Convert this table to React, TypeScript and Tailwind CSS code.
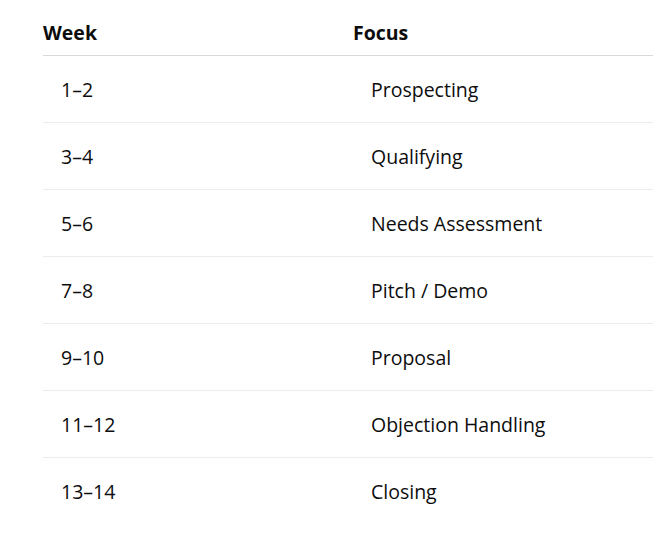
import React from "react";

const rows = [
  { week: "1–2", focus: "Prospecting" },
  { week: "3–4", focus: "Qualifying" },
  { week: "5–6", focus: "Needs Assessment" },
  { week: "7–8", focus: "Pitch / Demo" },
  { week: "9–10", focus: "Proposal" },
  { week: "11–12", focus: "Objection Handling" },
  { week: "13–14", focus: "Closing" },
];

export default function App() {
  return (
    <div
      className="min-h-screen bg-white pl-[43px] text-[#0d0d0d]"
      style={{ fontFamily: '"Open Sans", "Noto Sans", sans-serif' }}
    >
      <table className="w-[610px] border-collapse text-left">
        <thead>
          <tr className="h-[55px] border-b border-[#d9d9d9]">
            <th className="w-[310px] p-0 pb-[8px] align-bottom text-[19.5px] font-bold leading-7">
              Week
            </th>
            <th className="p-0 pb-[8px] align-bottom text-[19.5px] font-bold leading-7">
              Focus
            </th>
          </tr>
        </thead>
        <tbody>
          {rows.map((r, i) => (
            <tr
              key={r.week}
              className={`h-[67px] ${
                i < rows.length - 1 ? "border-b border-[#ececec]" : ""
              }`}
            >
              <td className="pb-0 pt-[3px] pl-[18px] align-middle text-[19.5px] leading-7">
                {r.week}
              </td>
              <td className="pb-0 pt-[3px] pl-[18px] align-middle text-[19.5px] leading-7">
                {r.focus}
              </td>
            </tr>
          ))}
        </tbody>
      </table>
    </div>
  );
}
